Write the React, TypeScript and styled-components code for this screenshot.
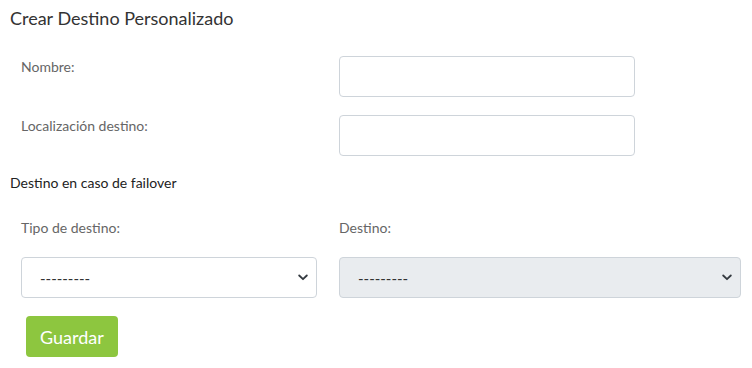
import React from "react";
import styled, { createGlobalStyle } from "styled-components";

const GlobalStyle = createGlobalStyle`
  body {
    margin: 0;
    background: #fff;
    font-family: Lato, "Open Sans", sans-serif;
    color: #333;
  }
`;

const Page = styled.div`
  padding: 8px 10px;
  width: 752px;
  box-sizing: border-box;
`;

const Title = styled.h3`
  margin: 0;
  font-size: 18px;
  font-weight: 400;
  line-height: 20px;
  color: #333;
`;

const Fields = styled.div`
  display: flex;
  flex-direction: column;
  gap: 18px;
  margin-top: 28px;
  padding-left: 11px;
`;

const FieldRow = styled.div`
  display: grid;
  grid-template-columns: 318px 296px;
  align-items: start;
`;

const Label = styled.label`
  font-size: 14px;
  line-height: 22px;
  color: #666;
`;

const TextInput = styled.input`
  box-sizing: border-box;
  height: 41px;
  width: 100%;
  border: 1px solid #ced4da;
  border-radius: 4px;
  background: #fff;
  font: inherit;
  padding: 0 12px;
  outline: none;
`;

const Subtitle = styled.div`
  margin-top: 18px;
  font-size: 14px;
  line-height: 18px;
  color: #222;
`;

const Columns = styled.div`
  display: grid;
  grid-template-columns: 296px 402px;
  column-gap: 22px;
  row-gap: 19px;
  margin-top: 26px;
  padding-left: 11px;
`;

const ColLabel = styled(Label)`
  line-height: 20px;
`;

const SelectWrap = styled.div`
  position: relative;
`;

const Select = styled.select<{ $disabled?: boolean }>`
  appearance: none;
  box-sizing: border-box;
  width: 100%;
  height: 41px;
  border: 1px solid #ced4da;
  border-radius: 4px;
  background: ${(p) => (p.$disabled ? "#e9ecef" : "#fff")};
  font-family: Lato, sans-serif;
  font-size: 15px;
  color: #333;
  padding: 0 30px 0 18px;
  outline: none;
  opacity: 1;
`;

const Chevron = styled.svg`
  position: absolute;
  right: 9px;
  top: 17px;
  width: 10px;
  height: 7px;
  pointer-events: none;
`;

const SaveButton = styled.button`
  margin: 18px 0 0 16px;
  height: 41px;
  padding: 0 14px;
  border: none;
  border-radius: 4px;
  background: #8dc63f;
  color: #fff;
  font-family: Lato, sans-serif;
  font-size: 18px;
  cursor: pointer;
`;

function Dropdown({ disabled }: { disabled?: boolean }) {
  return (
    <SelectWrap>
      <Select $disabled={disabled} disabled={disabled}>
        <option>---------</option>
      </Select>
      <Chevron viewBox="0 0 10 7">
        <path d="M1.2 1.5 L5 5.2 L8.8 1.5" fill="none" stroke="#343a40" strokeWidth="1.8" strokeLinecap="round" strokeLinejoin="round" />
      </Chevron>
    </SelectWrap>
  );
}

export default function App() {
  return (
    <Page>
      <GlobalStyle />
      <Title>Crear Destino Personalizado</Title>
      <Fields>
        <FieldRow>
          <Label>Nombre:</Label>
          <TextInput type="text" />
        </FieldRow>
        <FieldRow>
          <Label>Localización destino:</Label>
          <TextInput type="text" />
        </FieldRow>
      </Fields>
      <Subtitle>Destino en caso de failover</Subtitle>
      <Columns>
        <ColLabel>Tipo de destino:</ColLabel>
        <ColLabel>Destino:</ColLabel>
        <Dropdown />
        <Dropdown disabled />
      </Columns>
      <SaveButton>Guardar</SaveButton>
    </Page>
  );
}
